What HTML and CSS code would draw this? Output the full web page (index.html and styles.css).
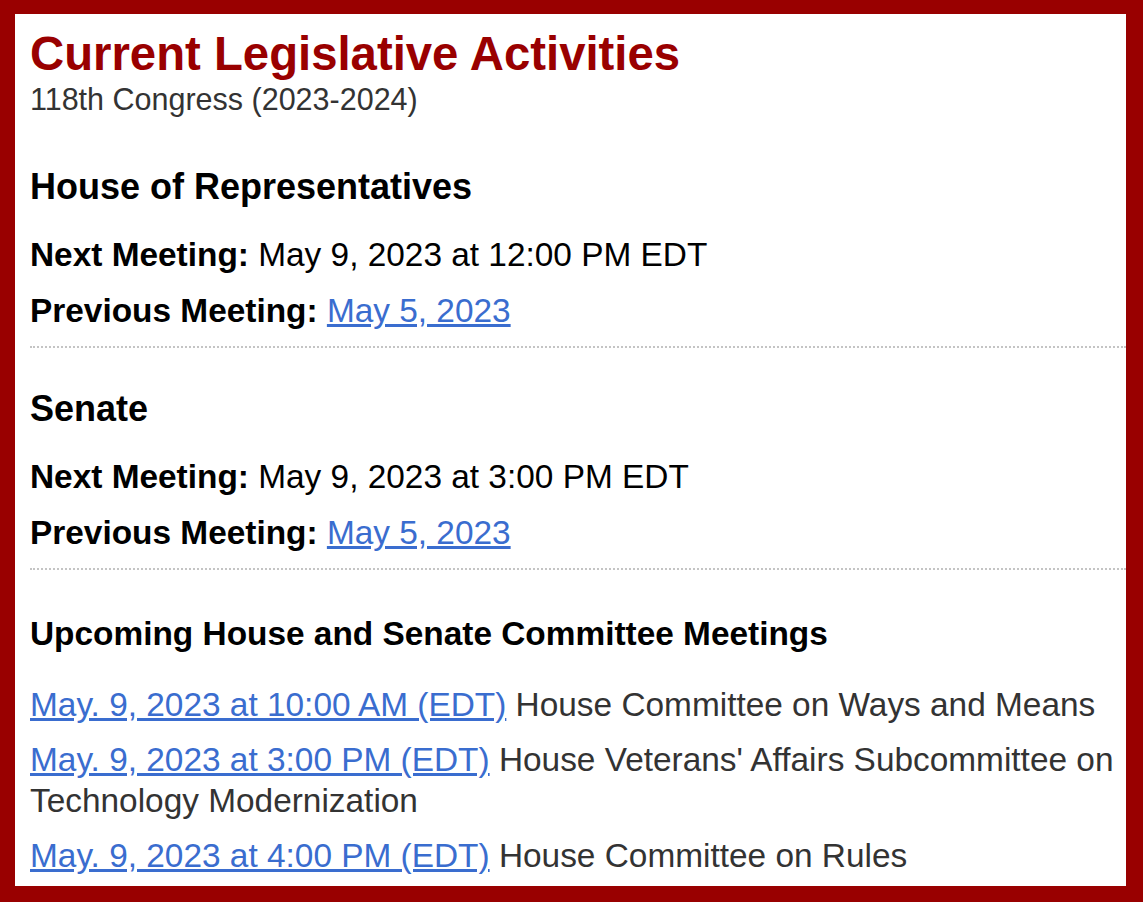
FILE: index.html
```html
<!DOCTYPE html>
<html lang="en">
<head>
<meta charset="utf-8">
<title>Current Legislative Activities</title>
<link rel="stylesheet" href="styles.css">
</head>
<body>
<div class="frame">
  <header class="intro">
    <h1 class="title">Current Legislative Activities</h1>
    <p class="congress">118th Congress (2023-2024)</p>
  </header>

  <section class="chamber">
    <h2 class="chamber-name">House of Representatives</h2>
    <p class="meeting"><strong>Next Meeting:</strong> May 9, 2023 at 12:00 PM EDT</p>
    <p class="meeting"><strong>Previous Meeting:</strong> <a class="link" href="#">May 5, 2023</a></p>
  </section>

  <section class="chamber">
    <h2 class="chamber-name">Senate</h2>
    <p class="meeting"><strong>Next Meeting:</strong> May 9, 2023 at 3:00 PM EDT</p>
    <p class="meeting"><strong>Previous Meeting:</strong> <a class="link" href="#">May 5, 2023</a></p>
  </section>

  <section class="committees">
    <h3 class="committees-title">Upcoming House and Senate Committee Meetings</h3>
    <ul class="committee-list">
      <li class="committee"><a class="link" href="#">May. 9, 2023 at 10:00 AM (EDT)</a> House Committee on Ways and Means</li>
      <li class="committee"><a class="link" href="#">May. 9, 2023 at 3:00 PM (EDT)</a> House Veterans' Affairs Subcommittee on Technology Modernization</li>
      <li class="committee"><a class="link" href="#">May. 9, 2023 at 4:00 PM (EDT)</a> House Committee on Rules</li>
    </ul>
  </section>
</div>
</body>
</html>
```

FILE: styles.css
```css
html, body {
  height: 100%;
  margin: 0;
}

body {
  box-sizing: border-box;
  padding: 14px 17px 16px 15px;
  background: #990000;
  font-family: "Liberation Sans", Arial, Helvetica, sans-serif;
  color: #000;
}

.frame {
  box-sizing: border-box;
  height: 100%;
  padding: 17px 0 0 15px;
  background: #fff;
  overflow: hidden;
}

.intro {
  padding-bottom: 12px;
}

.title {
  margin: 0;
  font-size: 47.3px;
  line-height: 46px;
  font-weight: bold;
  color: #990000;
}

.congress {
  margin: 7px 0 0;
  font-size: 30.5px;
  line-height: 30px;
  color: #333;
}

.chamber {
  padding: 43px 0 15px;
  border-bottom: 2px dotted #c4c4c4;
}

.chamber-name {
  margin: 0 0 30px;
  font-size: 36px;
  line-height: 36px;
  font-weight: bold;
}

.meeting {
  margin: 0;
  font-size: 33.4px;
  line-height: 40px;
}

.meeting + .meeting {
  margin-top: 16px;
}

.link {
  color: #3a6dcf;
  text-decoration: underline;
}

.committees {
  padding: 44px 10px 0 0;
}

.committees-title {
  margin: 0 0 30px;
  font-size: 33.4px;
  line-height: 40px;
  font-weight: bold;
}

.committee-list {
  margin: 0;
  padding: 0;
  list-style: none;
}

.committee {
  font-size: 33.4px;
  line-height: 41px;
  color: #333;
}

.committee + .committee {
  margin-top: 14px;
}
```
